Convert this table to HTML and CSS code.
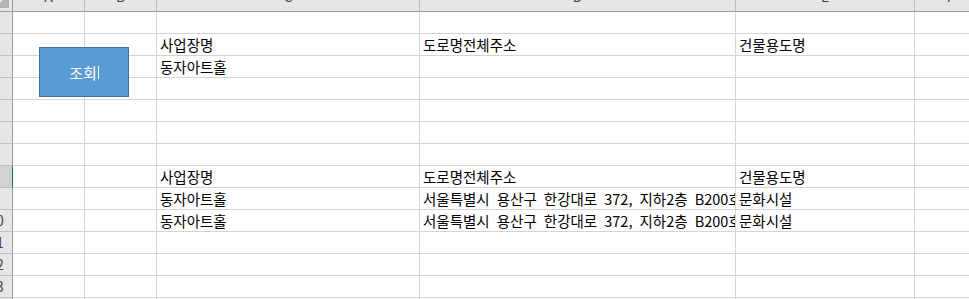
FILE: index.html
```html
<!DOCTYPE html>
<html lang="ko">
<head>
    <meta charset="UTF-8">
    <title>Sheet1</title>
    <link rel="stylesheet" href="styles.css">
</head>
<body>
    <div class="wrap">
        <div class="sheet">
            <!-- column headers -->
            <div class="corner"><span class="tri"></span></div>
            <div class="colhead"><span>A</span></div>
            <div class="colhead"><span>B</span></div>
            <div class="colhead"><span>C</span></div>
            <div class="colhead"><span>D</span></div>
            <div class="colhead"><span>E</span></div>
            <div class="colhead"><span>F</span></div>

            <div class="rowhead"><span>1</span></div>
            <div class="cell"></div><div class="cell"></div><div class="cell"></div><div class="cell"></div><div class="cell"></div><div class="cell"></div>

            <div class="rowhead"><span>2</span></div>
            <div class="cell"></div><div class="cell"></div>
            <div class="cell">사업장명</div>
            <div class="cell">도로명전체주소</div>
            <div class="cell">건물용도명</div>
            <div class="cell"></div>

            <div class="rowhead"><span>3</span></div>
            <div class="cell"></div><div class="cell"></div>
            <div class="cell">동자아트홀</div>
            <div class="cell"></div><div class="cell"></div><div class="cell"></div>

            <div class="rowhead"><span>4</span></div>
            <div class="cell"></div><div class="cell"></div><div class="cell"></div><div class="cell"></div><div class="cell"></div><div class="cell"></div>

            <div class="rowhead"><span>5</span></div>
            <div class="cell"></div><div class="cell"></div><div class="cell"></div><div class="cell"></div><div class="cell"></div><div class="cell"></div>

            <div class="rowhead"><span>6</span></div>
            <div class="cell"></div><div class="cell"></div><div class="cell"></div><div class="cell"></div><div class="cell"></div><div class="cell"></div>

            <div class="rowhead"><span>7</span></div>
            <div class="cell"></div><div class="cell"></div><div class="cell"></div><div class="cell"></div><div class="cell"></div><div class="cell"></div>

            <div class="rowhead active"><span>8</span></div>
            <div class="cell"></div><div class="cell"></div>
            <div class="cell">사업장명</div>
            <div class="cell">도로명전체주소</div>
            <div class="cell">건물용도명</div>
            <div class="cell"></div>

            <div class="rowhead"><span>9</span></div>
            <div class="cell"></div><div class="cell"></div>
            <div class="cell">동자아트홀</div>
            <div class="cell">서울특별시 용산구 한강대로 372, 지하2층 B200호 (한강로3가)</div>
            <div class="cell">문화시설</div>
            <div class="cell"></div>

            <div class="rowhead"><span>10</span></div>
            <div class="cell"></div><div class="cell"></div>
            <div class="cell">동자아트홀</div>
            <div class="cell">서울특별시 용산구 한강대로 372, 지하2층 B200호 (한강로3가)</div>
            <div class="cell">문화시설</div>
            <div class="cell"></div>

            <div class="rowhead"><span>11</span></div>
            <div class="cell"></div><div class="cell"></div><div class="cell"></div><div class="cell"></div><div class="cell"></div><div class="cell"></div>

            <div class="rowhead"><span>12</span></div>
            <div class="cell"></div><div class="cell"></div><div class="cell"></div><div class="cell"></div><div class="cell"></div><div class="cell"></div>

            <div class="rowhead"><span>13</span></div>
            <div class="cell"></div><div class="cell"></div><div class="cell"></div><div class="cell"></div><div class="cell"></div><div class="cell"></div>

            <div class="rowhead"><span>14</span></div>
            <div class="cell"></div><div class="cell"></div><div class="cell"></div><div class="cell"></div><div class="cell"></div><div class="cell"></div>
        </div>

        <!-- macro button sitting on top of the grid -->
        <div class="btn"><span class="label">조회</span><span class="caret"></span></div>
    </div>
</body>
</html>
```

FILE: styles.css
```css
html, body {
    margin: 0;
    padding: 0;
    overflow: hidden;
    background: #fff;
}
.wrap {
    position: relative;
    width: 969px;
    height: 299px;
    overflow: hidden;
}
.sheet {
    display: grid;
    grid-template-columns: 13px 72px 72px 263px 316px 179px 72px;
    grid-template-rows: 12px;
    grid-auto-rows: 22px;
    font-family: "Noto Sans CJK KR", "Noto Sans", sans-serif;
    font-size: 14.5px;
    color: #000;
}
.sheet > div {
    box-sizing: border-box;
    border-right: 1px solid #d4d4d4;
    border-bottom: 1px solid #d4d4d4;
    overflow: hidden;
}
.corner {
    position: relative;
    background: #e6e6e6;
    border-right-color: #9b9b9b !important;
    border-bottom-color: #9b9b9b !important;
}
.tri {
    position: absolute;
    right: 3px;
    bottom: 3px;
    width: 14px;
    height: 14px;
    background: #b4b4b4;
    clip-path: polygon(100% 0, 100% 100%, 0 100%);
}
.colhead {
    background: #e6e6e6;
    border-right-color: #bfbfbf !important;
    border-bottom-color: #9b9b9b !important;
    text-align: center;
    color: #444;
    font-size: 14px;
}
.colhead span {
    display: block;
    line-height: 20px;
    margin-top: -14px;
}
.rowhead {
    background: #e6e6e6;
    border-right-color: #9b9b9b !important;
    border-bottom-color: #bfbfbf !important;
    color: #444;
    font-size: 14px;
}
.rowhead span {
    display: block;
    width: 24px;
    margin-left: -16px;
    text-align: center;
    line-height: 21px;
}
.rowhead.active {
    background: #d2d2d2;
    border-right-color: #217346 !important;
}
.cell {
    padding: 0 3px;
    line-height: 21px;
    white-space: nowrap;
    word-spacing: 3px;
}
.btn {
    position: absolute;
    left: 39px;
    top: 47px;
    width: 90px;
    height: 50px;
    box-sizing: border-box;
    border: 1px solid #41719c;
    background: #5b9bd5;
    color: #fff;
    font-family: "Noto Sans CJK KR", "Noto Sans", sans-serif;
    font-size: 15px;
    display: flex;
    align-items: center;
    justify-content: center;
}
.caret {
    display: inline-block;
    width: 1px;
    height: 13px;
    margin-left: 1px;
    background: #fff;
}
```
